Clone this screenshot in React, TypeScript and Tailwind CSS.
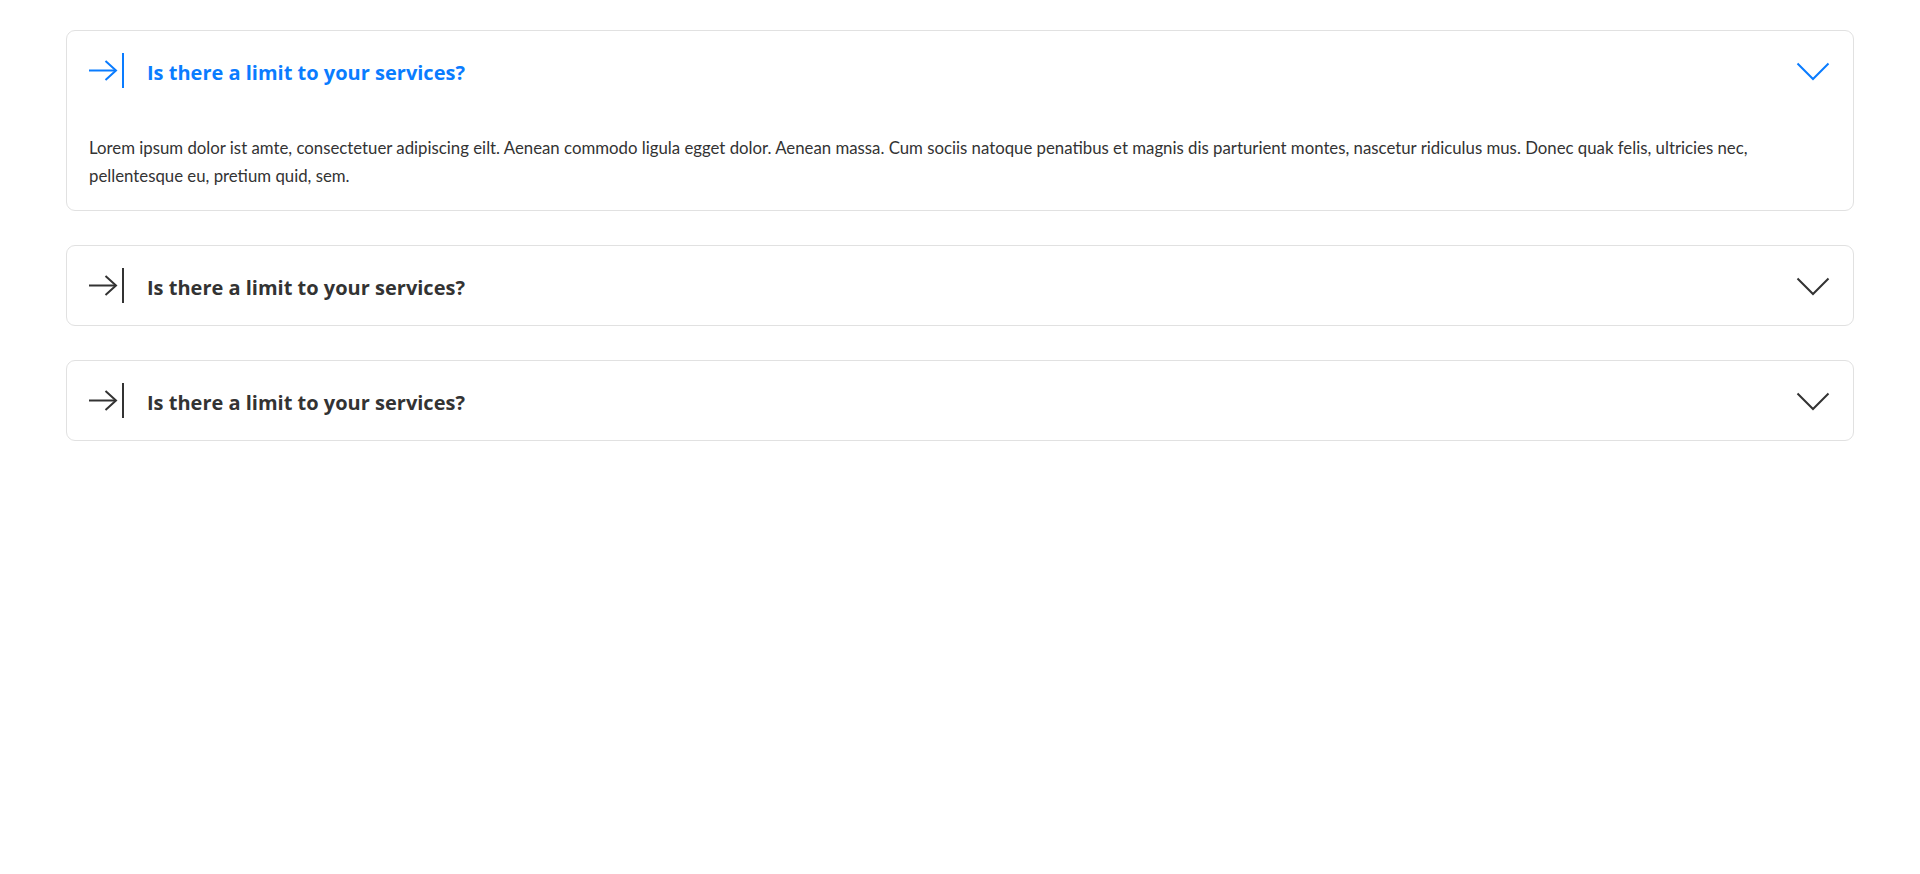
import React from "react";

const ArrowIcon = ({ color }: { color: string }) => (
  <svg width="36" height="35" viewBox="0 0 36 35" fill="none" className="shrink-0">
    <line x1="0" y1="17.5" x2="27" y2="17.5" stroke={color} strokeWidth="2" />
    <polyline points="16.5,8 27,17.5 16.5,27" stroke={color} strokeWidth="2" fill="none" />
    <line x1="34" y1="0" x2="34" y2="35" stroke={color} strokeWidth="2" />
  </svg>
);

const Chevron = ({ color }: { color: string }) => (
  <svg width="34" height="19" viewBox="0 0 34 19" fill="none" className="shrink-0">
    <polyline points="1.5,1.5 17,17 32.5,1.5" stroke={color} strokeWidth="2" fill="none" />
  </svg>
);

const Item = ({ open }: { open?: boolean }) => {
  const color = open ? "#0a7cff" : "#333333";
  return (
    <div className="rounded-[9px] border border-[#e1e1e1] bg-white">
      <div className="flex items-center px-[22px] py-[22px]">
        <ArrowIcon color={color} />
        <h3
          className={`ml-[22px] flex-1 pt-[4px] font-['Open_Sans',sans-serif] text-[20px] font-bold leading-[31px] ${
            open ? "text-[#0a7cff]" : "text-[#333333]"
          }`}
        >
          Is there a limit to your services?
        </h3>
        <div className="mr-[1px] pt-[2px]">
          <Chevron color={color} />
        </div>
      </div>
      {open && (
        <div className="px-[22px] pt-[24px] pb-[20px]">
          <p className="text-[16.8px] leading-[28px] text-[#333333]">
            Lorem ipsum dolor ist amte, consectetuer adipiscing eilt. Aenean commodo ligula egget dolor. Aenean massa.
            Cum sociis natoque penatibus et magnis dis parturient montes, nascetur ridiculus mus. Donec quak felis,
            ultricies nec, pellentesque eu, pretium quid, sem.
          </p>
        </div>
      )}
    </div>
  );
};

export default function App() {
  return (
    <div
      className="min-h-[874px] w-full bg-white px-[66px] pt-[30px]"
      style={{ fontFamily: "Lato, 'Noto Sans', sans-serif" }}
    >
      <div className="flex flex-col gap-[34px]">
        <Item open />
        <Item />
        <Item />
      </div>
    </div>
  );
}
